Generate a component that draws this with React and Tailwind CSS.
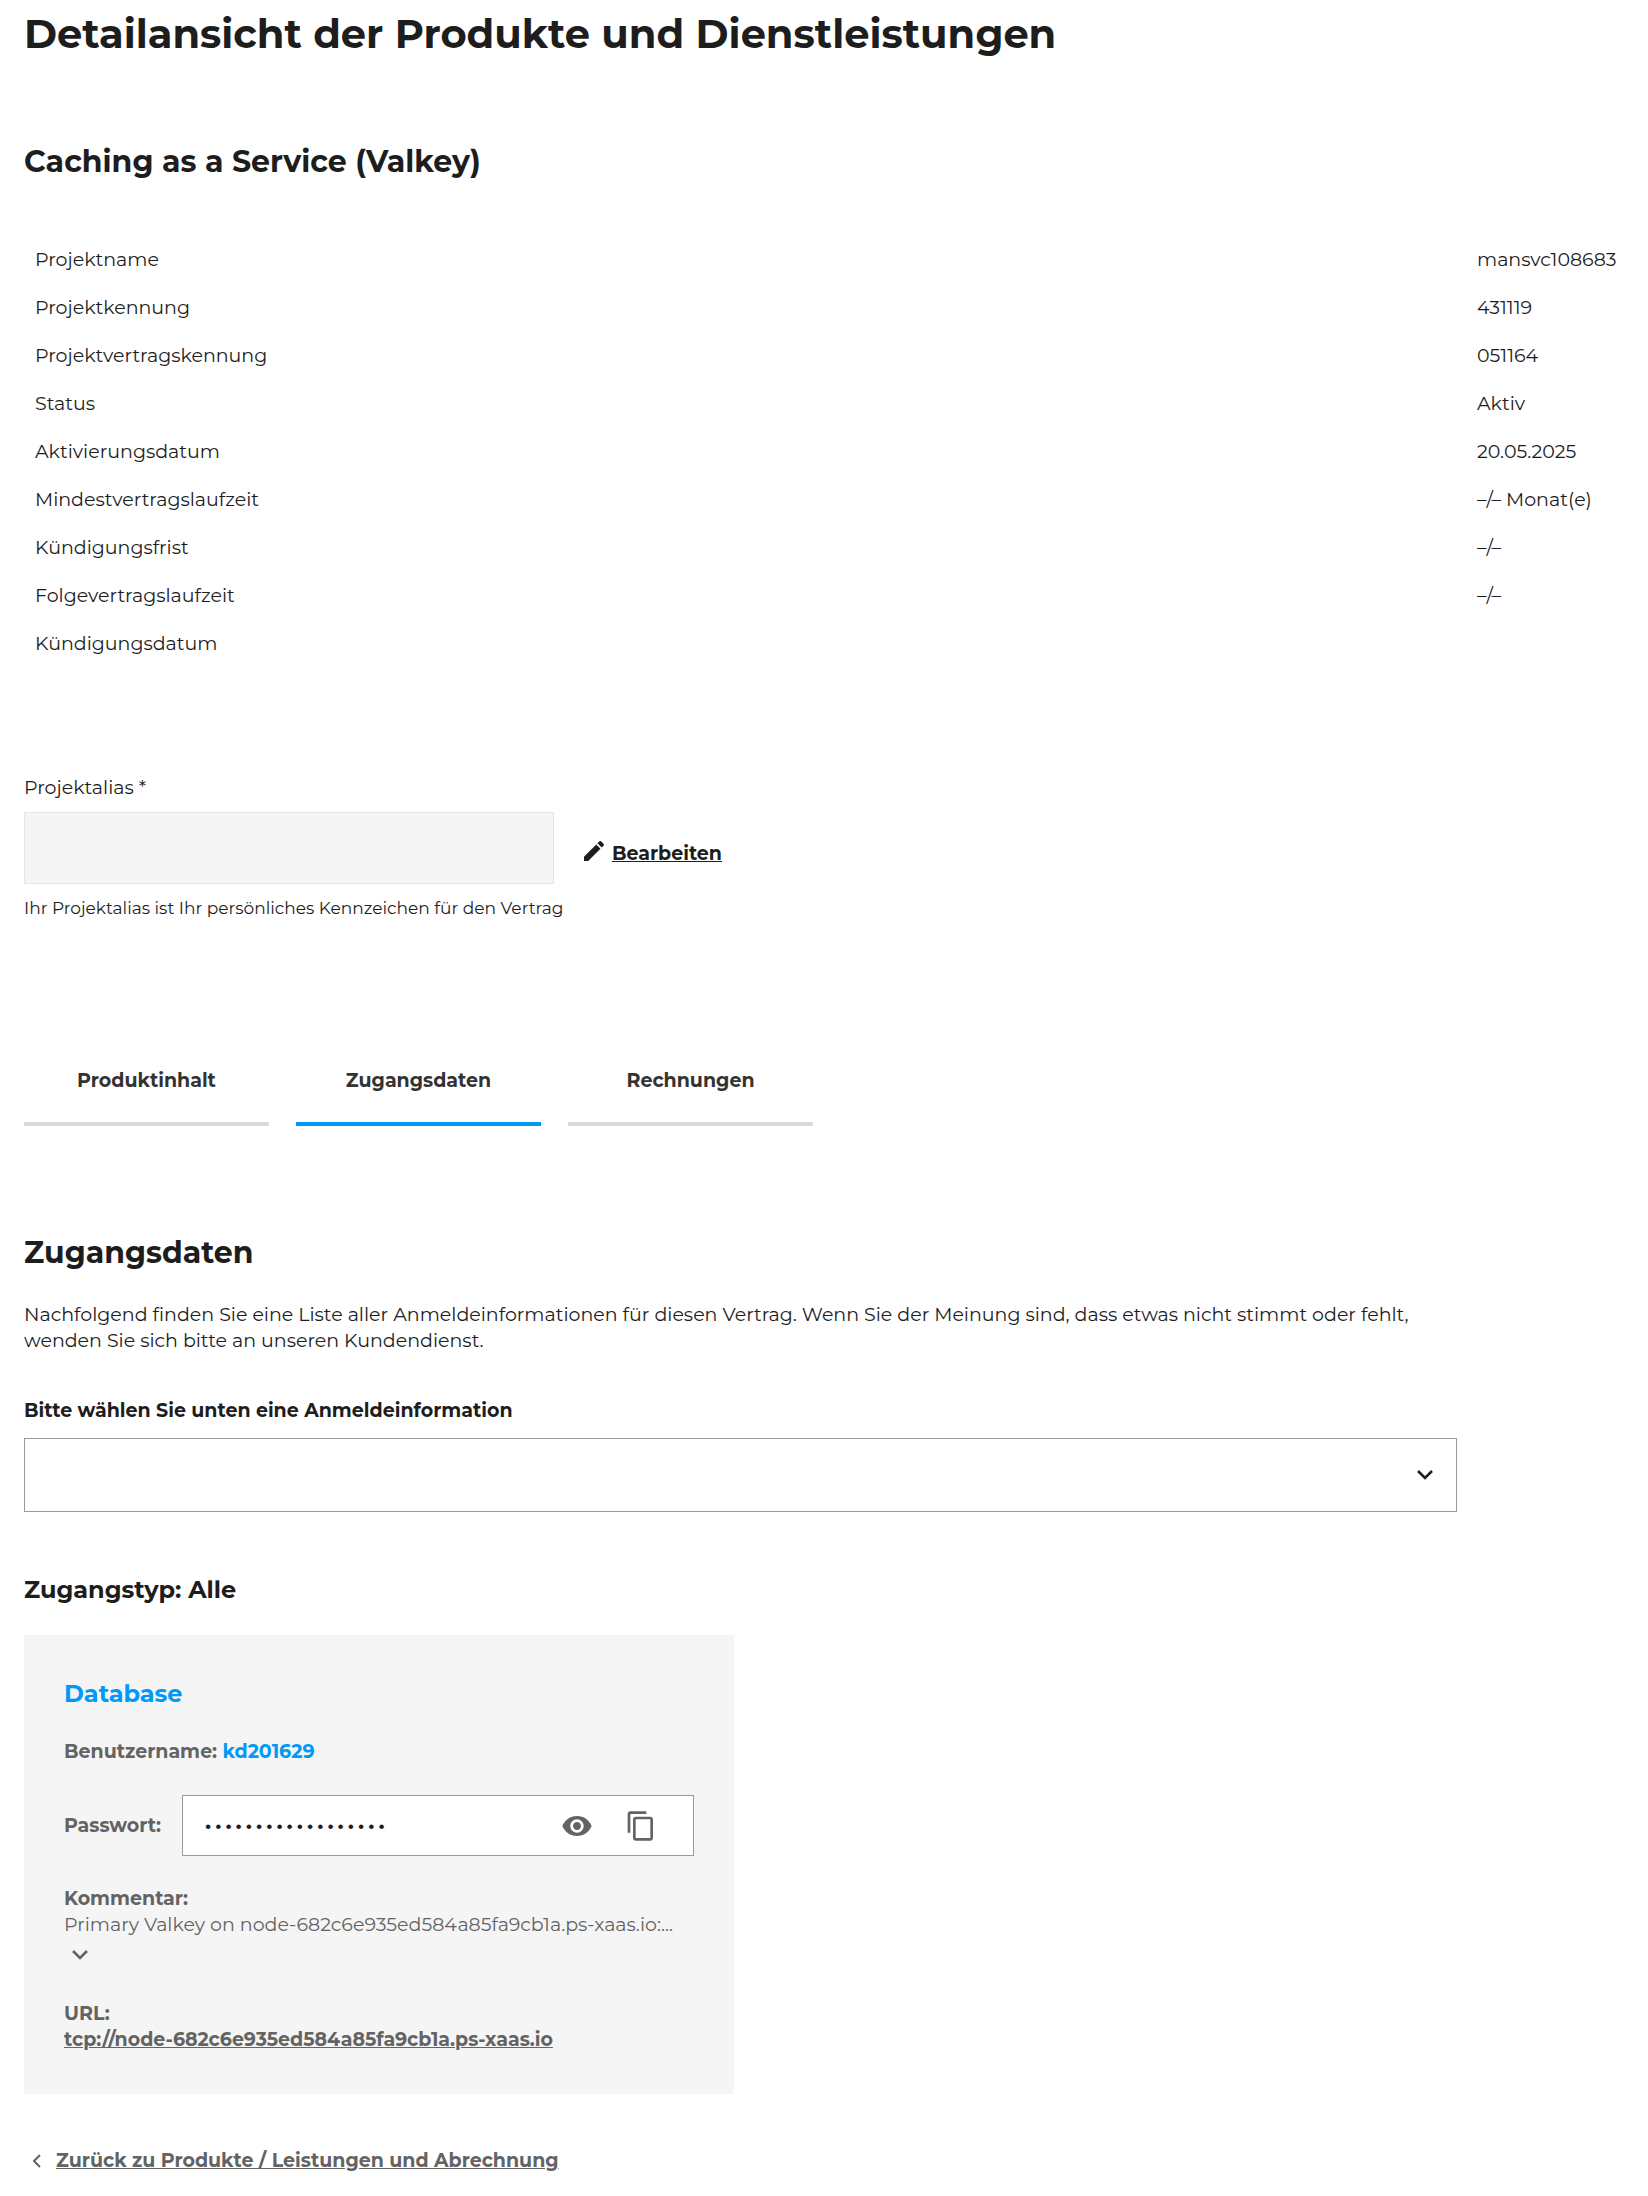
import { useState } from 'react';

const details = [
  { label: 'Projektname', value: 'mansvc108683' },
  { label: 'Projektkennung', value: '431119' },
  { label: 'Projektvertragskennung', value: '051164' },
  { label: 'Status', value: 'Aktiv' },
  { label: 'Aktivierungsdatum', value: '20.05.2025' },
  { label: 'Mindestvertragslaufzeit', value: '–/– Monat(e)' },
  { label: 'Kündigungsfrist', value: '–/–' },
  { label: 'Folgevertragslaufzeit', value: '–/–' },
  { label: 'Kündigungsdatum', value: '' },
];

const tabs = ['Produktinhalt', 'Zugangsdaten', 'Rechnungen'];

function PencilIcon() {
  return (
    <svg viewBox="3 3 18 18" className="size-5" fill="currentColor" aria-hidden="true">
      <path d="M3 17.25V21h3.75L17.81 9.94l-3.75-3.75L3 17.25zM20.71 7.04a1 1 0 0 0 0-1.41l-2.34-2.34a1 1 0 0 0-1.41 0l-1.83 1.83 3.75 3.75 1.83-1.83z" />
    </svg>
  );
}

function EyeIcon() {
  return (
    <svg viewBox="0 0 24 24" className="size-8" fill="currentColor" aria-hidden="true">
      <path d="M12 4.5C7 4.5 2.73 7.61 1 12c1.73 4.39 6 7.5 11 7.5s9.27-3.11 11-7.5c-1.73-4.39-6-7.5-11-7.5zM12 17c-2.76 0-5-2.24-5-5s2.24-5 5-5 5 2.24 5 5-2.24 5-5 5zm0-8c-1.66 0-3 1.34-3 3s1.34 3 3 3 3-1.34 3-3-1.34-3-3-3z" />
    </svg>
  );
}

function CopyIcon() {
  return (
    <svg viewBox="0 0 24 24" className="size-8" fill="currentColor" aria-hidden="true">
      <path d="M16 1H4c-1.1 0-2 .9-2 2v14h2V3h12V1zm3 4H8c-1.1 0-2 .9-2 2v14c0 1.1.9 2 2 2h11c1.1 0 2-.9 2-2V7c0-1.1-.9-2-2-2zm0 16H8V7h11v14z" />
    </svg>
  );
}

function ChevronDown({ className }) {
  return (
    <svg viewBox="0 0 16 10" className={className} fill="none" stroke="currentColor" strokeWidth="2.6" aria-hidden="true">
      <path d="M1 1l7 7 7-7" />
    </svg>
  );
}

export default function App() {
  const [activeTab, setActiveTab] = useState('Zugangsdaten');
  const [showPassword, setShowPassword] = useState(false);

  return (
    <main className="bg-white px-6 pt-2 pb-5 font-[Montserrat,Inter,sans-serif] text-[19px] leading-[26px] text-[#1d1d1d]">
      <h1 className="text-[40px] leading-[52px] font-bold">Detailansicht der Produkte und Dienstleistungen</h1>

      <h2 className="mt-[82px] text-[30px] leading-[40px] font-bold">Caching as a Service (Valkey)</h2>

      <table className="mt-[54px] w-full">
        <tbody>
          {details.map((row) => (
            <tr key={row.label} className="h-12">
              <th scope="row" className="pl-[11px] text-left font-normal">{row.label}</th>
              <td className="w-[147px] whitespace-nowrap">{row.value}</td>
            </tr>
          ))}
        </tbody>
      </table>

      <div className="mt-[107px] flex items-center gap-[30px]">
        <div className="w-[530px]">
          <label htmlFor="alias" className="block">Projektalias *</label>
          <input id="alias" type="text" disabled className="mt-[11px] block h-[72px] w-full border border-[#e6e6e6] bg-[#f5f5f5] px-4" />
          <p className="mt-3 text-[17px] leading-6 whitespace-nowrap">Ihr Projektalias ist Ihr persönliches Kennzeichen für den Vertrag</p>
        </div>
        <button type="button" className="flex items-start gap-2 pt-3 font-bold underline">
          <PencilIcon />
          Bearbeiten
        </button>
      </div>

      <div role="tablist" className="mt-[121px] flex gap-[27px]">
        {tabs.map((tab) => (
          <button
            key={tab}
            type="button"
            role="tab"
            aria-selected={activeTab === tab}
            onClick={() => setActiveTab(tab)}
            className={`h-[85px] w-[245px] border-b-4 pb-0.5 font-bold text-[#333333] ${
              activeTab === tab ? 'border-[#0099f7]' : 'border-[#dadada]'
            }`}
          >
            {tab}
          </button>
        ))}
      </div>

      <h2 className="mt-[107px] text-[30px] leading-[40px] font-bold">Zugangsdaten</h2>
      <p className="mt-[29px] max-w-[1433px]">
        Nachfolgend finden Sie eine Liste aller Anmeldeinformationen für diesen Vertrag. Wenn Sie der Meinung sind, dass etwas nicht stimmt oder fehlt, wenden Sie sich bitte an unseren Kundendienst.
      </p>

      <label htmlFor="credential" className="mt-11 block font-bold">Bitte wählen Sie unten eine Anmeldeinformation</label>
      <div className="relative mt-[14px] max-w-[1433px]">
        <select id="credential" defaultValue="" className="block h-[74px] w-full appearance-none border border-[#999999] bg-white px-6">
          <option value=""></option>
          <option value="kd201629">kd201629</option>
        </select>
        <ChevronDown className="pointer-events-none absolute top-8 right-6 h-2.5 w-4" />
      </div>

      <h3 className="mt-[60px] text-[24px] leading-9 font-bold">Zugangstyp: Alle</h3>

      <section className="mt-[27px] max-w-[710px] bg-[#f5f5f5] px-10 pt-[41px] pb-[41px] text-[#636363]">
        <h4 className="text-[24px] leading-9 font-bold text-[#0099f7]">Database</h4>
        <p className="mt-[27px] font-bold">
          Benutzername: <span className="text-[#0099f7]">kd201629</span>
        </p>

        <div className="mt-[30px] flex items-center justify-between">
          <label htmlFor="password" className="font-bold">Passwort:</label>
          <div className="flex h-[61px] w-[512px] items-center border border-[#999999] bg-white pr-9 pl-5">
            <input
              id="password"
              type={showPassword ? 'text' : 'password'}
              readOnly
              defaultValue="vk-4f8a1c9e27b6d0x"
              className="min-w-0 flex-1 bg-transparent pt-1 font-['Liberation_Mono',monospace] text-[17px] text-[#1d1d1d] outline-none"
            />
            <button type="button" aria-label="Passwort anzeigen" onClick={() => setShowPassword(!showPassword)}>
              <EyeIcon />
            </button>
            <button type="button" aria-label="Passwort kopieren" className="ml-8">
              <CopyIcon />
            </button>
          </div>
        </div>

        <div className="mt-[30px]">
          <p className="font-bold">Kommentar:</p>
          <p className="whitespace-nowrap">Primary Valkey on node-682c6e935ed584a85fa9cb1a.ps-xaas.io:...</p>
          <button type="button" aria-label="Mehr anzeigen" className="mt-1 ml-2 flex h-[26px] items-center">
            <ChevronDown className="h-2.5 w-4" />
          </button>
        </div>

        <div className="mt-[33px]">
          <p className="font-bold">URL:</p>
          <a href="#url" className="block w-fit font-bold underline">tcp://node-682c6e935ed584a85fa9cb1a.ps-xaas.io</a>
        </div>
      </section>

      <a href="#zurueck" className="mt-[54px] ml-[9px] flex w-fit items-center gap-[15px] font-bold text-[#636363] underline">
        <svg viewBox="0 0 8 14" className="h-3.5 w-2" fill="none" stroke="currentColor" strokeWidth="2" aria-hidden="true">
          <path d="M7 1L1 7l6 6" />
        </svg>
        Zurück zu Produkte / Leistungen und Abrechnung
      </a>
    </main>
  );
}
